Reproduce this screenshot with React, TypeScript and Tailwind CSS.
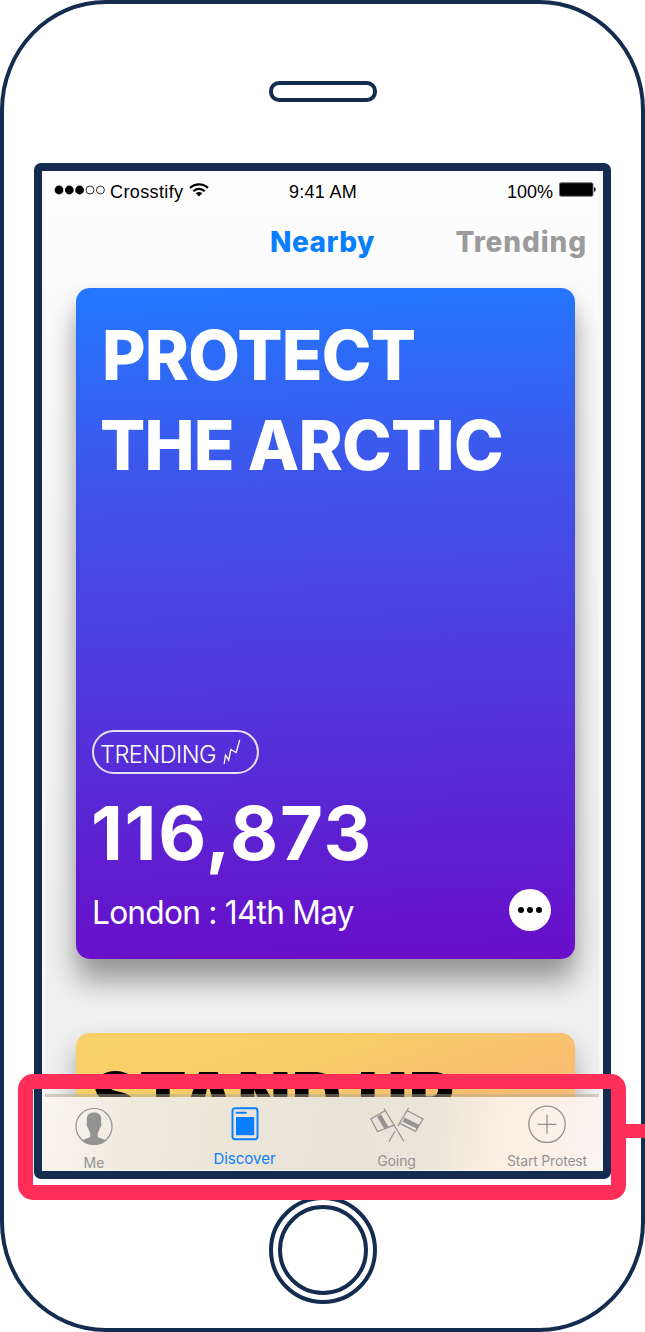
import React from "react";

function Wifi() {
  return (
    <svg width="20" height="14" viewBox="0 0 20 14" className="ml-[6px] mt-[12px]" fill="none" stroke="#000" strokeWidth="2.2">
      <path d="M1 4.9C6 .1 14 .1 19 4.9" />
      <path d="M4.3 8.2c3.200-3 8.200-3 11.400 0" />
      <path d="M10 13.500 6.700 10.300c1.800-1.700 4.800-1.700 6.600 0z" fill="#000" stroke="none" />
    </svg>
  );
}

function StatusBar() {
  return (
    <div className="grid h-[40px] grid-cols-3 font-['Liberation_Sans',sans-serif] text-[18px] leading-[42px] text-black">
      <div className="flex pl-[9px]">
        <svg width="51" height="10" viewBox="0 0 51 10" className="mt-[14px] shrink-0">
          <circle cx="5" cy="5" r="4.400" />
          <circle cx="15.300" cy="5" r="4.400" />
          <circle cx="25.600" cy="5" r="4.400" />
          <circle cx="36" cy="5" r="4" fill="none" stroke="#000" strokeWidth=".8" />
          <circle cx="46.400" cy="5" r="4" fill="none" stroke="#000" strokeWidth=".8" />
        </svg>
        <span className="ml-[5px] tracking-[0.38px]">Crosstify</span>
        <Wifi />
      </div>
      <div className="pl-[2px] text-center tracking-[0.25px]">9:41 AM</div>
      <div className="flex justify-end pr-[3px]">
        <span>100%</span>
        <svg width="38" height="15" viewBox="0 0 38 15" className="ml-[5px] mt-[11px]">
          <rect x="1.500" y=".8" width="33.500" height="13.400" rx="1.500" fill="#000" stroke="#666" strokeWidth=".9" />
          <path d="M36 5.200c2.200.4 2.200 4.200 0 4.600z" />
        </svg>
      </div>
    </div>
  );
}

function TrendingCard() {
  return (
    <article className="ml-[31px] flex h-[671px] w-[499px] shrink-0 flex-col rounded-[14px] bg-[linear-gradient(178deg,#2378ff_0%,#3f54ea_29%,#5235dc_62%,#5c22d2_80%,#6a0dc9_100%)] text-white shadow-[0_22px_28px_rgba(0,0,0,0.36),0_2px_16px_rgba(0,0,0,0.06)]">
      <h1 className="ml-[25px] mt-[22px] h-[420px] origin-left scale-x-[.97] text-[69px] font-extrabold leading-[90px] tracking-[-0.8px]">
        <span className="ml-[1px] block w-max">PROTECT</span>
        <span className="-ml-[1px] block w-max">THE ARCTIC</span>
      </h1>
      <div className="ml-[16px] flex h-[44px] w-[167px] rounded-full border-[2px] border-white/85 pl-[6px]">
        <span className="w-[117px] text-[23.5px] font-[350] leading-[46px] tracking-[-0.500px]">TRENDING</span>
        <svg width="18" height="27" viewBox="0 0 18 27" className="ml-[6px] mt-[7px] shrink-0" fill="none" stroke="#fff" strokeWidth="1.300">
          <path d="M1.200 25 2.500 16l3.200 5.200 2.100-10.700 5.400 3L16.700 1" />
        </svg>
      </div>
      <p className="ml-[15px] mt-[14px] h-[90px] text-[74px] font-bold leading-[91px] tracking-[1.700px]">116,873</p>
      <div className="mt-[9px] flex items-start justify-between pl-[16px] pr-[24px]">
        <p className="w-[262px] origin-left scale-x-[.96] whitespace-nowrap text-[33px] font-[370] leading-[51px] tracking-[-0.8px]">London : 14th May</p>
        <button className="mt-[2px] flex size-[42px] items-center justify-center gap-[2.500px] rounded-full bg-white">
          <i className="size-[6.500px] rounded-full bg-black" />
          <i className="size-[6.500px] rounded-full bg-black" />
          <i className="size-[6.500px] rounded-full bg-black" />
        </button>
      </div>
    </article>
  );
}

function StandUpCard() {
  return (
    <article className="ml-[31px] mt-[74px] h-[200px] w-[499px] shrink-0 rounded-[14px] bg-[linear-gradient(160deg,#f8d069_0%,#f8cd68_28%,#f8c06f_50%,#f9b676_80%)] shadow-[0_14px_26px_rgba(0,0,0,0.3)]">
      <h2 className="ml-[16px] mt-[19px] w-max text-[69px] font-black leading-[90px] tracking-[1.200px] text-black">STAND UP</h2>
    </article>
  );
}

function TabBar() {
  return (
    <nav className="h-[74px] shrink-0 border-b border-[#fbf9f6] bg-[linear-gradient(100deg,#faf7f0_0%,#f1ebdf_15%,#ece5d8_33%,#e9e2d7_55%,#ede5d9_70%,#fbeee1_80%,#fcf1e8_92%,#f9f6f4_100%)] text-[14px] leading-[18px] text-[#939393]">
      <div className="grid h-full grid-cols-[103px_198px_106px_154px]">
        <div className="flex flex-col items-center pt-[10px]">
          <svg width="38" height="38" viewBox="0 0 38 38" fill="none">
            <circle cx="19" cy="19.500" r="18" stroke="#939393" strokeWidth="1.200" />
            <path fill="#939393" d="M19 5.500c-4.500 0-7.200 2.200-7.200 6.500l.2 4c-.7.300-.5 2.200.1 3.500.2.900.6 1.200 1 1.300.5 2.400 1.300 4 2.200 5.200v3.500c-1.600 2-5.800 2.200-8.300 4.200 6.800 5.400 17.200 5.400 24 0-2.500-2-6.700-2.200-8.300-4.200V26c.9-1.200 1.700-2.800 2.200-5.200.4-.1.800-.4 1-1.300.6-1.300.8-3.200.1-3.500l.2-4c0-4.300-2.700-6.500-7.200-6.500z" />
          </svg>
          <span className="ml-px mt-[9px]">Me</span>
        </div>
        <div className="flex flex-col items-center pl-px pt-[10px] text-[#087fff]">
          <svg width="28" height="34" viewBox="0 0 28 34" fill="none" stroke="currentColor" strokeWidth="1.900">
            <rect x="1.500" y="1.300" width="25" height="31" rx="2.500" />
            <path d="M5.500 5.800h9.500" strokeLinecap="round" />
            <path d="M5 10h18.200v18.200H5z" fill="currentColor" stroke="none" />
          </svg>
          <span className="mt-[9px] text-[15px]">Discover</span>
        </div>
        <div className="flex flex-col items-center pl-px pt-[10px]">
          <svg width="54" height="36" viewBox="0 0 54 36" fill="none" stroke="#939393" strokeWidth="1.300">
            <path d="M14 1.500 34 34.500M38.500 1 28 19M25 24 19 34.500M15 3.800.9 12l6.700 12.500 15.900-6.200M37.500 3.800 53 12l-7.500 12.300L30.500 16.700" />
            <path d="M9 8.500 16.500 21M33.500 12.500 48 19.800" strokeWidth="4.500" />
          </svg>
          <span className="mt-[9px] tracking-[-0.1px]">Going</span>
        </div>
        <div className="flex flex-col items-center pl-[42px] pt-[8px]">
          <svg width="38" height="38" viewBox="0 0 38 38" fill="none" stroke="#939393" strokeWidth="1.300">
            <circle cx="19" cy="19.300" r="18.200" />
            <path d="M9.500 19.300h19M19 9.800v19" />
          </svg>
          <span className="mt-[9px] whitespace-nowrap tracking-[-0.2px]">Start Protest</span>
        </div>
      </div>
    </nav>
  );
}

export default function App() {
  return (
    <div className="relative h-[1332px] w-[645px] overflow-hidden bg-white font-['Inter','Liberation_Sans',sans-serif]">
      <div className="flex h-[1332px] w-[645px] flex-col items-center rounded-[106px/110px] border-[4px] border-[#132c50]">
        <div className="mt-[77px] h-[21px] w-[108px] rounded-[10px] border-[4px] border-[#132c50]" />
        <main className="mt-[61px] flex h-[1016px] w-[577px] shrink-0 flex-col overflow-hidden rounded-[7px] border-[8px] border-[#132c50] bg-[#f0f0f0]">
          <div className="relative flex h-[926px] shrink-0 flex-col overflow-hidden border-l-[3px] border-r-[4px] border-[#f7f7f7] bg-[linear-gradient(#fdfdfd,#fbfbfb_120px,#f0f0f0_760px)]">
            <StatusBar />
            <div className="flex h-[77px] shrink-0 items-start justify-between pl-[225px] pr-[12px] pt-[12px] text-[28px] font-extrabold leading-[38px]">
              <span className="tracking-[0.500px] text-[#087fff]">Nearby</span>
              <span className="tracking-[0.900px] text-[#9b9b9b]">Trending</span>
            </div>
            <TrendingCard />
            <StandUpCard />
            <div className="absolute inset-x-0 bottom-0 h-[3px] bg-[#b4a894]/50" />
          </div>
          <TabBar />
        </main>
        <div className="mt-[17px] flex size-[108px] shrink-0 items-center justify-center rounded-full border-[4px] border-[#132c50]">
          <div className="size-[90px] rounded-full border-[4px] border-[#132c50]" />
        </div>
      </div>
      <div className="absolute left-[18px] top-[1074px] h-[126px] w-[608px] rounded-[15px] border-[15px] border-[#ff2f5a]" />
      <div className="absolute left-[626px] top-[1124px] h-[14px] w-[19px] bg-[#ff2f5a]" />
    </div>
  );
}
